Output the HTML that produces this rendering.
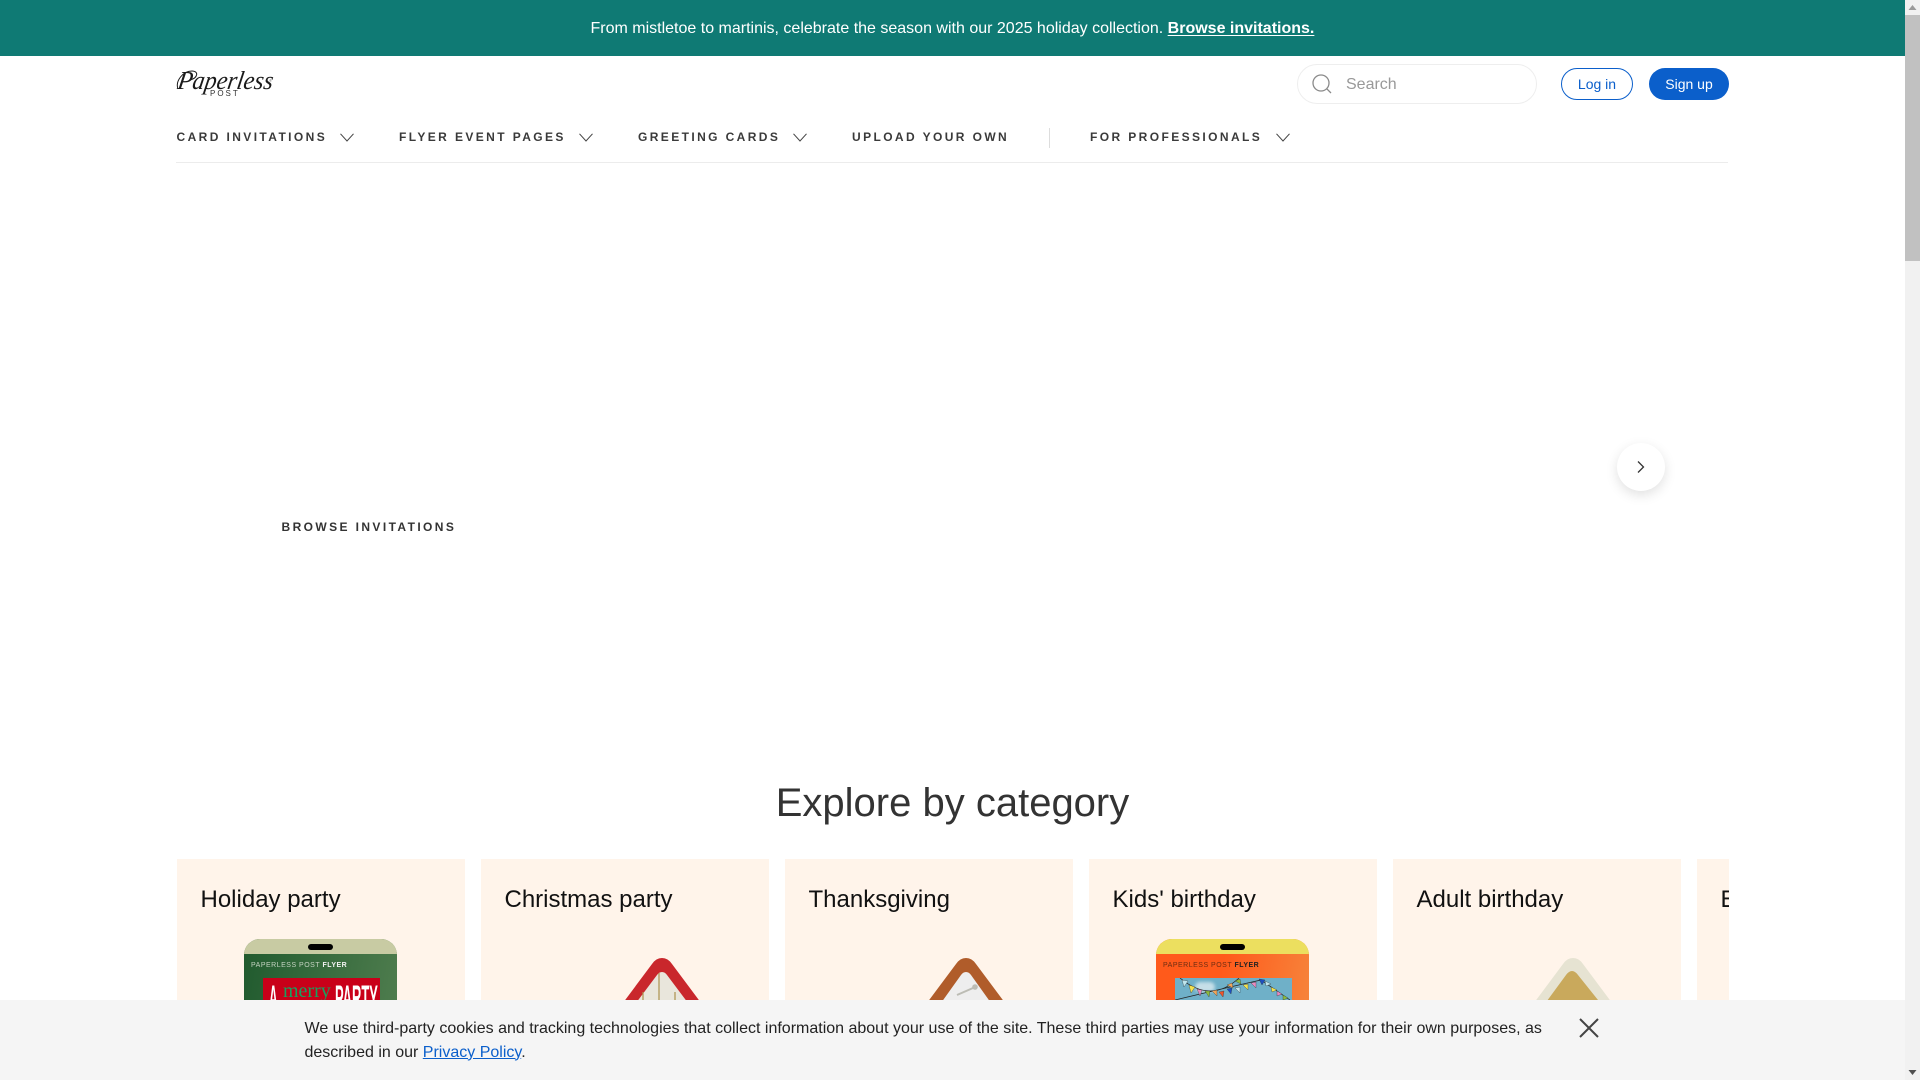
<!DOCTYPE html>
<html lang="en">
<head>
<meta charset="utf-8">
<title>Paperless Post</title>
<style>
html,body{margin:0;padding:0;width:1920px;height:1080px;overflow:hidden;background:#fff;}
body{position:relative;font-family:"Liberation Sans",Arial,sans-serif;color:#333;}
.a{position:absolute;white-space:nowrap;}
.nav{top:129px;line-height:16px;font-size:12px;font-weight:bold;letter-spacing:2.4px;color:#3a3a3a;}
.chev{position:absolute;top:133px;}
.card{position:absolute;top:859px;width:288px;height:221px;background:#fff4ea;overflow:hidden;}
.card .t{position:absolute;left:23.5px;top:27px;font-size:24px;line-height:28px;color:#111;white-space:nowrap;}
.phone{position:absolute;left:67px;top:80px;width:153px;height:141px;border-radius:16px 16px 0 0;overflow:hidden;}
.phone .bar{position:absolute;left:0;top:0;width:100%;height:15px;}
.phone .pill{position:absolute;left:64px;top:5px;width:25px;height:6px;border-radius:3px;background:#000;}
.phone .lbl{position:absolute;left:7px;top:22px;font-size:7px;line-height:10px;letter-spacing:.5px;white-space:nowrap;}
.phone .box{position:absolute;left:19px;top:39px;width:117px;height:102px;overflow:hidden;}
</style>
</head>
<body>

<div class="a" style="left:0;top:0;width:1905px;height:56px;background:#0f7a74;"></div>
<div class="a" style="left:590.5px;top:19px;font-size:16px;line-height:20px;color:#fff;">From mistletoe to martinis, celebrate the season with our 2025 holiday collection. <b style="text-decoration:underline;text-underline-offset:2px;">Browse invitations.</b></div>

<!-- logo -->
<svg class="a" style="left:176px;top:69px;" width="30" height="24" viewBox="0 0 30 24" fill="none" stroke="#1a1a1a" stroke-width="1"><path d="M2 20C-1 12 7 2 16 2C23 2 22 9 14 11"/></svg>
<div class="a" style="left:178px;top:65px;font-family:'Liberation Serif',serif;font-style:italic;font-size:26px;line-height:32px;color:#1a1a1a;transform-origin:0 50%;transform:scaleX(.93) skewX(-10deg);">Paperless</div>
<div class="a" style="left:269px;top:78px;font-size:4px;line-height:5px;color:#777;">®</div>
<div class="a" style="left:210px;top:89px;font-size:8px;line-height:10px;letter-spacing:2px;color:#333;">POST</div>

<!-- search + buttons -->
<div class="a" style="left:1297px;top:64px;width:238px;height:38px;border:1px solid #eee;border-radius:20px;background:#fff;"></div>
<svg class="a" style="left:1311px;top:73px;" width="22" height="22" viewBox="0 0 22 22" fill="none" stroke="#8a8a8a" stroke-width="1.3"><circle cx="10" cy="10" r="8"/><path d="M15.8 15.8L20 20"/></svg>
<div class="a" style="left:1346px;top:74.5px;font-size:16px;line-height:20px;color:#999;">Search</div>
<div class="a" style="left:1561px;top:68px;width:70px;height:30px;border:1px solid #0b5fcb;border-radius:16px;background:#fff;text-align:center;font-size:14px;line-height:31px;color:#0b5fcb;">Log in</div>
<div class="a" style="left:1649px;top:68px;width:80px;height:32px;border-radius:16px;background:#0b5fcb;text-align:center;font-size:14px;line-height:32px;color:#fff;">Sign up</div>

<!-- nav -->
<div class="a nav" style="left:176.5px;">CARD INVITATIONS</div>
<svg class="chev" style="left:340px;" width="14" height="9" viewBox="0 0 14 9" fill="none" stroke="#444" stroke-width="1"><path d="M.5 .8L7 8L13.5 .8"/></svg>
<div class="a nav" style="left:399px;">FLYER EVENT PAGES</div>
<svg class="chev" style="left:579px;" width="14" height="9" viewBox="0 0 14 9" fill="none" stroke="#444" stroke-width="1"><path d="M.5 .8L7 8L13.5 .8"/></svg>
<div class="a nav" style="left:638px;">GREETING CARDS</div>
<svg class="chev" style="left:793px;" width="14" height="9" viewBox="0 0 14 9" fill="none" stroke="#444" stroke-width="1"><path d="M.5 .8L7 8L13.5 .8"/></svg>
<div class="a nav" style="left:852px;">UPLOAD YOUR OWN</div>
<div class="a" style="left:1049px;top:128px;width:1px;height:20px;background:#ddd;"></div>
<div class="a nav" style="left:1090px;">FOR PROFESSIONALS</div>
<svg class="chev" style="left:1276px;" width="14" height="9" viewBox="0 0 14 9" fill="none" stroke="#444" stroke-width="1"><path d="M.5 .8L7 8L13.5 .8"/></svg>
<div class="a" style="left:176px;top:162px;width:1552px;height:1px;background:#ececec;"></div>

<!-- hero -->
<div class="a" style="left:1617px;top:443px;width:48px;height:48px;border-radius:50%;background:#fff;box-shadow:0 4px 12px rgba(0,0,0,.12);"></div>
<svg class="a" style="left:1636px;top:460px;" width="10" height="14" viewBox="0 0 10 14" fill="none" stroke="#333" stroke-width="1.3"><path d="M2 1.5L7.5 7L2 12.5"/></svg>
<div class="a" style="left:281.5px;top:518.5px;font-size:12px;line-height:16px;font-weight:bold;letter-spacing:2.4px;color:#333;">BROWSE INVITATIONS</div>

<div class="a" style="left:0;width:1905px;top:780px;text-align:center;font-size:40px;line-height:46px;color:#333;">Explore by category</div>

<!-- cards -->
<div class="card" style="left:177px;">
  <div class="t">Holiday party</div>
  <div class="phone" style="background:linear-gradient(100deg,#205a2e,#527f50);">
    <div class="bar" style="background:#c8cba3;"></div><div class="pill"></div>
    <div class="lbl" style="color:#c5d3c2;">PAPERLESS POST <b style="color:#f2f2f2;">FLYER</b></div>
    <div class="box" style="background:#c90019;">
      <span style="position:absolute;left:6px;top:2px;font:bold 34px/36px 'Liberation Sans',sans-serif;color:#fff;transform-origin:0 0;transform:scaleX(.35);">A</span>
      <span style="position:absolute;left:20px;top:1px;font:20px/24px 'Liberation Serif',serif;color:#17a05e;">merry</span>
      <span style="position:absolute;left:72px;top:2px;font:bold 34px/36px 'Liberation Sans',sans-serif;color:#fff;transform-origin:0 0;transform:scaleX(.38);">PARTY</span>
    </div>
  </div>
</div>

<div class="card" style="left:481px;">
  <div class="t">Christmas party</div>
  <svg style="position:absolute;left:0;top:0;" width="288" height="221" viewBox="0 0 288 221">
    <path d="M181 99Q175 99 171 105L130 160V221H232V160L191 105Q187 99 181 99Z" fill="#c9272c"/>
    <path d="M181 113Q178 113 176 116L155 144V221H207V144L186 116Q184 113 181 113Z" fill="#e9e6dc"/>
    <path d="M178 114V150M162 133V150M194 133V150" stroke="#ab914e" stroke-width="1.2" fill="none"/>
  </svg>
</div>

<div class="card" style="left:785px;">
  <div class="t">Thanksgiving</div>
  <svg style="position:absolute;left:0;top:0;" width="288" height="221" viewBox="0 0 288 221">
    <path d="M181 99Q175 99 171 105L130 160V221H232V160L191 105Q187 99 181 99Z" fill="#b05c2a"/>
    <path d="M181 113Q178 113 176 116L156 144V221H206V144L186 116Q184 113 181 113Z" fill="#eeeeee"/>
    <path d="M172 136L188 129" stroke="#bcbcb4" stroke-width="2" fill="none"/><circle cx="190" cy="128" r="2.8" fill="#bcbcb4"/>
  </svg>
</div>

<div class="card" style="left:1089px;">
  <div class="t">Kids' birthday</div>
  <div class="phone" style="background:linear-gradient(100deg,#ff5a1b 40%,#f5893f);">
    <div class="bar" style="background:#ecdf5f;"></div><div class="pill"></div>
    <div class="lbl" style="color:#6d2d12;">PAPERLESS POST <b style="color:#222;">FLYER</b></div>
    <div class="box" style="background:#6fb0c8;">
      <div style="position:absolute;left:20px;top:4px;width:20px;height:10px;border-radius:5px;background:#c6dfe8;filter:blur(1.5px);"></div>
      <svg width="117" height="22" viewBox="0 0 117 22" style="position:absolute;left:0;top:0;">
        <path d="M5 0Q36 26 64 0M0 22Q50 10 86 2L115 22" fill="none" stroke="#222" stroke-width=".7"/>
        <path d="M7 2l6 1-4 6z" fill="#bfe6ee" stroke="#222" stroke-width=".3"/><path d="M14 7l6 2-4 6z" fill="#f4e14e" stroke="#222" stroke-width=".3"/><path d="M22 11l5 1-2 6z" fill="#e98bc0" stroke="#222" stroke-width=".3"/>
        <path d="M30 13l5 0-1 6z" fill="#8dbb3e" stroke="#222" stroke-width=".3"/><path d="M37 13l5-1 0 6z" fill="#f2a65a" stroke="#222" stroke-width=".3"/><path d="M44 14l5-1-1 6z" fill="#f0542a" stroke="#222" stroke-width=".3"/>
        <path d="M52 11l5-1-1 6z" fill="#1d4fc0" stroke="#222" stroke-width=".3"/><path d="M60 10l5-1 0 6z" fill="#bfe6ee" stroke="#222" stroke-width=".3"/><path d="M68 7l5-1 0 6z" fill="#f4e14e" stroke="#222" stroke-width=".3"/>
        <path d="M76 5l5-1 0 6z" fill="#e98bc0" stroke="#222" stroke-width=".3"/><path d="M52 7l5-2 1 5z" fill="#f2a65a" stroke="#222" stroke-width=".3"/><path d="M60 3l5-2 1 5z" fill="#8dbb3e" stroke="#222" stroke-width=".3"/>
        <path d="M84 1l6 1-3 5z" fill="#1d4fc0" stroke="#222" stroke-width=".3"/><path d="M90 3l6 3-5 2z" fill="#bfe6ee" stroke="#222" stroke-width=".3"/><path d="M96 9l6 3-5 2z" fill="#f4e14e" stroke="#222" stroke-width=".3"/>
        <path d="M102 13l5 3-5 2z" fill="#e98bc0" stroke="#222" stroke-width=".3"/><path d="M108 17l5 3-5 2z" fill="#8dbb3e" stroke="#222" stroke-width=".3"/>
      </svg>
    </div>
  </div>
</div>

<div class="card" style="left:1393px;">
  <div class="t">Adult birthday</div>
  <svg style="position:absolute;left:0;top:0;" width="288" height="221" viewBox="0 0 288 221">
    <path d="M180 99Q174 99 170 105L129 160V221H231V160L190 105Q186 99 180 99Z" fill="#e6e3d2"/>
    <path d="M179 112Q176 112 173 116L151 146V221H209V146L185 116Q182 112 179 112Z" fill="#c9a95c"/>
  </svg>
</div>

<div class="card" style="left:1697px;width:32px;">
  <div class="t">Engagement</div>
</div>

<!-- cookie -->
<div class="a" style="left:0;top:1000px;width:1905px;height:80px;background:#f5f5f5;"></div>
<div class="a" style="left:304.5px;top:1016.5px;font-size:16px;line-height:24px;color:#222;">We use third-party cookies and tracking technologies that collect information about your use of the site. These third parties may use your information for their own purposes, as<br>described in our <span style="color:#0b5fcb;text-decoration:underline;">Privacy Policy</span>.</div>
<svg class="a" style="left:1579px;top:1018px;" width="20" height="20" viewBox="0 0 20 20" fill="none" stroke="#444" stroke-width="2"><path d="M1 1L19 19M19 1L1 19"/></svg>

<!-- scrollbar -->
<div class="a" style="left:1905px;top:0;width:15px;height:1080px;background:#f1f1f1;"></div>
<div class="a" style="left:1905px;top:15px;width:15px;height:246px;background:#c1c1c1;"></div>
<svg class="a" style="left:1905px;top:0;" width="15" height="15" viewBox="0 0 15 15"><path d="M3.5 10L7.5 5L11.5 10Z" fill="#9a9a9a"/></svg>
<svg class="a" style="left:1905px;top:1065px;" width="15" height="15" viewBox="0 0 15 15"><path d="M3.5 5L7.5 10L11.5 5Z" fill="#505050"/></svg>

</body>
</html>
